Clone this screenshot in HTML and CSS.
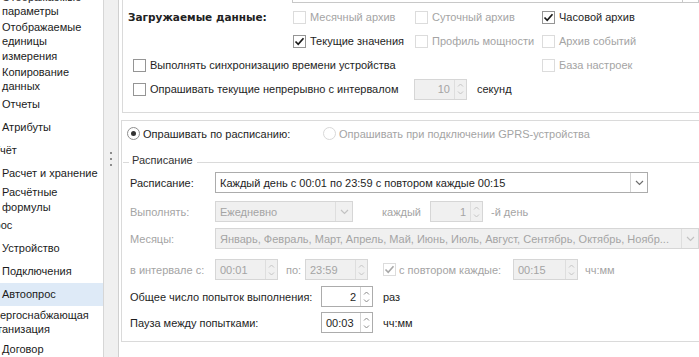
FILE: index.html
```html
<!DOCTYPE html>
<html lang="ru">
<head>
<meta charset="utf-8">
<title>Автоопрос</title>
<link rel="stylesheet" href="styles.css">
</head>
<body>
<div class="app">
  <nav class="sidebar">
    <div class="item h28 first">Отображаемые<br>параметры</div>
    <div class="item h47">Отображаемые<br>единицы<br>измерения</div>
    <div class="item h28">Копирование<br>данных</div>
    <div class="item">Отчеты</div>
    <div class="item">Атрибуты</div>
    <div class="item hdr"><span class="off-uchet">Учёт</span></div>
    <div class="item">Расчет и хранение</div>
    <div class="item h29">Расчётные<br>формулы</div>
    <div class="item hdr"><span class="off-opros">Опрос</span></div>
    <div class="item">Устройство</div>
    <div class="item">Подключения</div>
    <div class="item selected">Автоопрос</div>
    <div class="item h32 hdr"><span class="off-energo">Энергоснабжающая<br>организация</span></div>
    <div class="item">Договор</div>
  </nav>

  <div class="splitter">
    <span class="dot"></span><span class="dot"></span><span class="dot"></span>
  </div>

  <main class="main">
    <section class="topgroup">
      <div class="stub"><span class="stub-btn"></span></div>
      <div class="loadgrid">
        <div class="title">Загружаемые данные:</div>
        <label class="chk disabled"><span class="box"></span>Месячный архив</label>
        <label class="chk disabled"><span class="box"></span>Суточный архив</label>
        <label class="chk"><span class="box"><svg width="11" height="11" viewBox="0 0 11 11"><path d="M1.5 5.5 L4.2 8.3 L9.5 2.2" fill="none" stroke="#1a1a1a" stroke-width="1.7"/></svg></span>Часовой архив</label>

        <div></div>
        <label class="chk"><span class="box"><svg width="11" height="11" viewBox="0 0 11 11"><path d="M1.5 5.5 L4.2 8.3 L9.5 2.2" fill="none" stroke="#1a1a1a" stroke-width="1.7"/></svg></span>Текущие значения</label>
        <label class="chk disabled"><span class="box"></span>Профиль мощности</label>
        <label class="chk disabled"><span class="box"></span>Архив событий</label>

        <label class="chk ind span3"><span class="box"></span>Выполнять синхронизацию времени устройства</label>
        <label class="chk disabled col4"><span class="box"></span>База настроек</label>

        <label class="chk ind span2"><span class="box"></span>Опрашивать текущие непрерывно с интервалом</label>
        <div class="spincell">
          <div class="input spin dis w53">
            <span class="val right">10</span>
            <span class="btn"><svg width="7" height="4" viewBox="0 0 7 4"><path d="M1 3.5 L3.5 1 L6 3.5" fill="none" stroke="#c4c4c4" stroke-width="1"/></svg><svg width="7" height="4" viewBox="0 0 7 4"><path d="M1 0.5 L3.5 3 L6 0.5" fill="none" stroke="#c4c4c4" stroke-width="1"/></svg></span>
          </div>
          <span class="after">секунд</span>
        </div>
      </div>
    </section>

    <section class="section">
      <div class="radiorow">
        <label class="ropt first-opt"><span class="radio on"></span>Опрашивать по расписанию:</label>
        <label class="ropt disabled"><span class="radio"></span>Опрашивать при подключении GPRS-устройства</label>
      </div>

      <div class="legend"><span class="dash"></span><span class="ltext">Расписание</span><span class="line"></span></div>

      <div class="frow">
        <span class="lbl">Расписание:</span>
        <div class="input combo w433">
          <span class="val">Каждый день с 00:01 по 23:59 с повтором каждые 00:15</span>
          <span class="btn"><svg width="9" height="6" viewBox="0 0 9 6"><path d="M1 1 L4.5 4.5 L8 1" fill="none" stroke="#6e6e6e" stroke-width="1.2"/></svg></span>
        </div>
      </div>

      <div class="frow disabled r2">
        <span class="lbl">Выполнять:</span>
        <div class="input combo dis w138">
          <span class="val">Ежедневно</span>
          <span class="btn"><svg width="9" height="6" viewBox="0 0 9 6"><path d="M1 1 L4.5 4.5 L8 1" fill="none" stroke="#c2c2c2" stroke-width="1.2"/></svg></span>
        </div>
        <span class="kazh">каждый</span>
        <div class="input spin dis w53">
          <span class="val right">1</span>
          <span class="btn"><svg width="7" height="4" viewBox="0 0 7 4"><path d="M1 3.5 L3.5 1 L6 3.5" fill="none" stroke="#c4c4c4" stroke-width="1"/></svg><svg width="7" height="4" viewBox="0 0 7 4"><path d="M1 0.5 L3.5 3 L6 0.5" fill="none" stroke="#c4c4c4" stroke-width="1"/></svg></span>
        </div>
        <span class="after8">-й день</span>
      </div>

      <div class="frow disabled r3">
        <span class="lbl">Месяцы:</span>
        <div class="input combo dis grow">
          <span class="val">Январь, Февраль, Март, Апрель, Май, Июнь, Июль, Август, Сентябрь, Октябрь, Ноябр...</span>
          <span class="btn"><svg width="9" height="6" viewBox="0 0 9 6"><path d="M1 1 L4.5 4.5 L8 1" fill="none" stroke="#c2c2c2" stroke-width="1.2"/></svg></span>
        </div>
      </div>

      <div class="frow disabled r4">
        <span class="lbl">в интервале с:</span>
        <div class="input spin dis w63">
          <span class="val">00:01</span>
          <span class="btn"><svg width="7" height="4" viewBox="0 0 7 4"><path d="M1 3.5 L3.5 1 L6 3.5" fill="none" stroke="#c4c4c4" stroke-width="1"/></svg><svg width="7" height="4" viewBox="0 0 7 4"><path d="M1 0.5 L3.5 3 L6 0.5" fill="none" stroke="#c4c4c4" stroke-width="1"/></svg></span>
        </div>
        <span class="po">по:</span>
        <div class="input spin dis w63">
          <span class="val">23:59</span>
          <span class="btn"><svg width="7" height="4" viewBox="0 0 7 4"><path d="M1 3.5 L3.5 1 L6 3.5" fill="none" stroke="#c4c4c4" stroke-width="1"/></svg><svg width="7" height="4" viewBox="0 0 7 4"><path d="M1 0.5 L3.5 3 L6 0.5" fill="none" stroke="#c4c4c4" stroke-width="1"/></svg></span>
        </div>
        <label class="chk rep"><span class="box"><svg width="11" height="11" viewBox="0 0 11 11"><path d="M1.5 5.5 L4.2 8.3 L9.5 2.2" fill="none" stroke="#a8a8a8" stroke-width="1.6"/></svg></span><span class="replbl">с повтором каждые:</span></label>
        <div class="input spin dis w65">
          <span class="val">00:15</span>
          <span class="btn"><svg width="7" height="4" viewBox="0 0 7 4"><path d="M1 3.5 L3.5 1 L6 3.5" fill="none" stroke="#c4c4c4" stroke-width="1"/></svg><svg width="7" height="4" viewBox="0 0 7 4"><path d="M1 0.5 L3.5 3 L6 0.5" fill="none" stroke="#c4c4c4" stroke-width="1"/></svg></span>
        </div>
        <span class="after7">чч:мм</span>
      </div>

      <div class="frow r5">
        <span class="lbl wide">Общее число попыток выполнения:</span>
        <div class="input spin w52">
          <span class="val right">2</span>
          <span class="btn"><svg width="7" height="4" viewBox="0 0 7 4"><path d="M1 3.5 L3.5 1 L6 3.5" fill="none" stroke="#8a8a8a" stroke-width="1"/></svg><svg width="7" height="4" viewBox="0 0 7 4"><path d="M1 0.5 L3.5 3 L6 0.5" fill="none" stroke="#8a8a8a" stroke-width="1"/></svg></span>
        </div>
        <span class="after10">раз</span>
      </div>

      <div class="frow r6">
        <span class="lbl wide">Пауза между попытками:</span>
        <div class="input spin w52">
          <span class="val">00:03</span>
          <span class="btn"><svg width="7" height="4" viewBox="0 0 7 4"><path d="M1 3.5 L3.5 1 L6 3.5" fill="none" stroke="#8a8a8a" stroke-width="1"/></svg><svg width="7" height="4" viewBox="0 0 7 4"><path d="M1 0.5 L3.5 3 L6 0.5" fill="none" stroke="#8a8a8a" stroke-width="1"/></svg></span>
        </div>
        <span class="after10">чч:мм</span>
      </div>
    </section>
  </main>
</div>
</body>
</html>
```
FILE: styles.css
```css
* { box-sizing: border-box; }
html, body { margin: 0; padding: 0; }
body {
  width: 699px;
  height: 357px;
  overflow: hidden;
  background: #fff;
  font-family: "Liberation Sans", Arial, sans-serif;
  font-size: 11px;
  color: #1e1e1e;
}
.app { display: flex; height: 357px; }

/* ---------- sidebar ---------- */
.sidebar {
  width: 104px;
  flex: none;
  border-right: 1px solid #d6d6d6;
  overflow: hidden;
  display: flex;
  flex-direction: column;
}
.item {
  flex: none;
  height: 23px;
  display: flex;
  align-items: center;
  padding-left: 2px;
  line-height: 14.5px;
  white-space: nowrap;
  color: #1b1b1b;
}
.item.first { margin-top: -10px; }
.h28 { height: 28px; }
.h29 { height: 29px; }
.h32 { height: 32px; }
.h47 { height: 47px; }
.item.hdr { padding-left: 0; }
.off-uchet { margin-left: -7px; }
.off-opros { margin-left: -20px; }
.off-energo { margin-left: -14px; }
.item.selected { background: #deeaf7; }

/* ---------- splitter ---------- */
.splitter {
  width: 15px;
  flex: none;
  background: #f0f0f0;
  border-right: 1px solid #d0d0d0;
  display: flex;
  flex-direction: column;
  align-items: center;
  padding-top: 152px;
  gap: 4px;
}
.dot { width: 2px; height: 2px; background: #8c8c8c; }

/* ---------- main ---------- */
.main { flex: 1; min-width: 0; display: flex; flex-direction: column; }

.topgroup {
  margin-left: 3px;
  height: 113px;
  flex: none;
  border-left: 1px solid #dadada;
  border-bottom: 1px solid #dadada;
}
.stub {
  margin-left: 169px;
  height: 3px;
  border: 1px solid #c8c8c8;
  border-top: 0;
  display: flex;
  justify-content: flex-end;
}
.stub-btn { width: 16px; border-left: 1px solid #c8c8c8; }

.loadgrid {
  margin-top: 2px;
  display: grid;
  grid-template-columns: 170px 122px 127px 1fr;
  grid-auto-rows: 24px;
  align-items: center;
}
.title {
  font-family: "DejaVu Sans", "Liberation Sans", sans-serif;
  font-size: 10.5px;
  font-weight: bold;
  padding-left: 5px;
  color: #222;
  white-space: nowrap;
}
.chk { display: flex; align-items: center; gap: 4px; white-space: nowrap; }
.box {
  width: 13px;
  height: 13px;
  flex: none;
  border: 1px solid #959595;
  background: #fff;
  display: flex;
  align-items: center;
  justify-content: center;
}
.disabled { color: #a4a4a4; }
.disabled .box { border-color: #dcdcdc; }
.ind { padding-left: 10px; }
.span2 { grid-column: 1 / span 2; }
.span3 { grid-column: 1 / span 3; }
.col4 { grid-column: 4; }
.spincell { display: flex; align-items: center; margin-left: -1px; }
.after { margin-left: 10px; }

/* inputs */
.input {
  height: 21px;
  flex: none;
  border: 1px solid #acacac;
  background: #fff;
  display: flex;
  align-items: stretch;
  color: #1e1e1e;
}
.input .val {
  flex: 1;
  min-width: 0;
  padding: 0 4px;
  display: flex;
  align-items: center;
  white-space: nowrap;
  overflow: hidden;
}
.input .val.right { justify-content: flex-end; }
.input .btn {
  flex: none;
  width: 17px;
  border-left: 1px solid #d4d4d4;
  display: flex;
  align-items: center;
  justify-content: center;
}
.input.spin .btn {
  width: 12px;
  flex-direction: column;
  gap: 4px;
}
.input.dis { background: #f0f0f0; border-color: #d6d6d6; color: #a4a4a4; }
.input.dis .btn { border-left-color: #dedede; }
.w52 { width: 52px; }
.w53 { width: 53px; }
.w63 { width: 63px; }
.w65 { width: 65px; }
.w138 { width: 138px; }
.w433 { width: 433px; }
.grow { flex: 1; }

/* schedule section */
.section {
  margin: 7px 0 0 2px;
  height: 222px;
  flex: none;
  border: 1px solid #dadada;
  border-right: 0;
}
.radiorow { height: 25px; display: flex; align-items: center; padding-left: 5px; }
.ropt { display: flex; align-items: center; gap: 3px; white-space: nowrap; }
.first-opt { width: 196px; }
.radio {
  width: 13px;
  height: 13px;
  border-radius: 50%;
  border: 1px solid #8e8e8e;
  background: #fff;
  display: flex;
  align-items: center;
  justify-content: center;
}
.radio.on::after {
  content: "";
  width: 5px;
  height: 5px;
  border-radius: 50%;
  background: #333;
}
.disabled .radio { border-color: #d8d8d8; }

.legend { height: 26px; padding-top: 2px; display: flex; align-items: center; }
.dash { width: 6px; height: 1px; margin: 4px 0 0 1px; background: #dadada; }
.ltext { padding: 0 4px 0 3px; color: #333; }
.line { flex: 1; height: 1px; margin-top: 4px; background: #dadada; }

.frow { display: flex; align-items: center; height: 21px; padding-left: 8px; }
.r2 { margin-top: 8px; }
.r3 { margin-top: 6px; }
.r4 { margin-top: 10px; }
.r5 { margin-top: 6px; }
.r6 { margin-top: 5px; }
.lbl { width: 85px; flex: none; white-space: nowrap; }
.lbl.wide { width: 191px; }
.kazh { margin-left: 29px; width: 48px; }
.after8 { margin-left: 8px; }
.after7 { margin-left: 7px; }
.after10 { margin-left: 10px; }
.po { margin-left: 8px; width: 19px; }
.rep { margin-left: 15px; gap: 3px; }
.rep .box { border-color: #dcdcdc; }
.replbl { width: 114px; }
```
